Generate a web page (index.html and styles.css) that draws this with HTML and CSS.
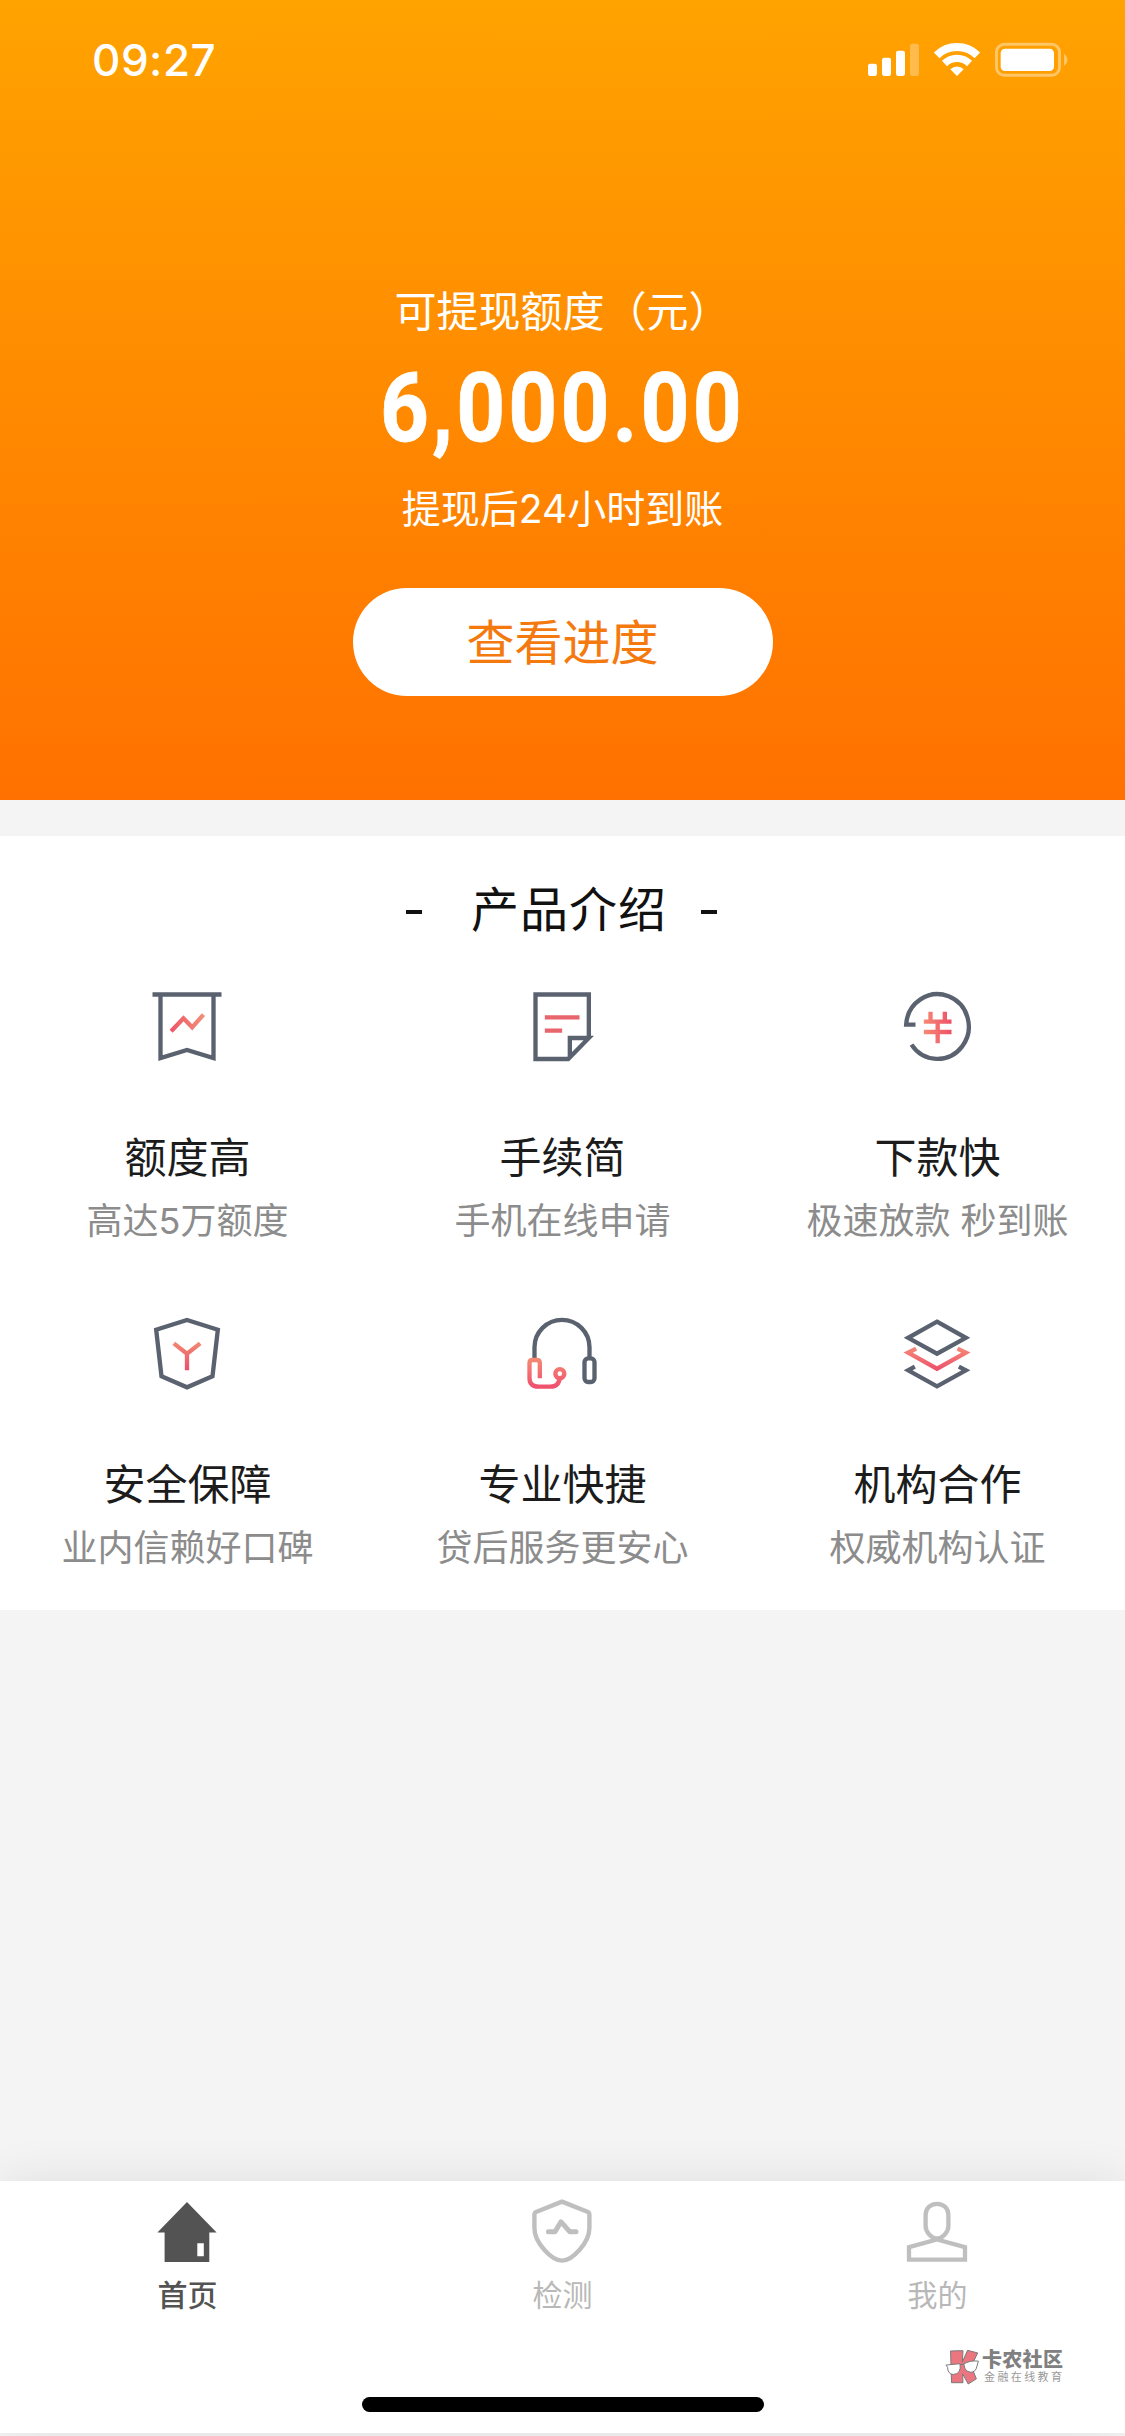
FILE: index.html
```html
<!DOCTYPE html>
<html lang="zh-CN">
<head>
<meta charset="utf-8">
<title>首页</title>
<link rel="stylesheet" href="styles.css">
</head>
<body>
<div class="app">
  <header class="hero">
    <div class="status">
      <span class="clock">09:27</span>
      <svg class="status-icons" viewBox="84 60 603 120">
        <g fill="#fff">
          <rect x="84" y="131" width="27" height="37" rx="7"/>
          <rect x="126" y="113" width="27" height="55" rx="7"/>
          <rect x="168" y="92" width="27" height="76" rx="7"/>
          <rect x="210" y="71" width="27" height="97" rx="7" opacity=".3"/>
          <path d="M351 168l-20-20.500a29 29 0 0 1 40 0z"/>
          <rect x="482" y="86" width="160" height="67" rx="13"/>
          <path d="M672 102a20 20 0 0 1 0 35z" opacity=".4"/>
        </g>
        <g fill="none" stroke="#fff">
          <path d="M290 106a87.500 87.500 0 0 1 122 0" stroke-width="24"/>
          <path d="M313.500 130.500a54 54 0 0 1 75 0" stroke-width="22"/>
          <rect x="469.500" y="73" width="189" height="93" rx="24" stroke-width="9" opacity=".4"/>
        </g>
      </svg>
    </div>
    <p class="hero-label">可提现额度（元）</p>
    <p class="amount">6,000.00</p>
    <p class="hero-note">提现后24小时到账</p>
    <a class="progress-btn">查看进度</a>
  </header>

  <section class="intro">
    <h2 class="intro-title"><span class="dash"></span><span class="intro-text">产品介绍</span><span class="dash"></span></h2>
    <div class="grid">
      <div class="feature">
        <svg class="feature-icon" viewBox="292.500 48 240 240" fill="none" stroke-width="13">
          <defs><linearGradient id="warm-h" gradientUnits="userSpaceOnUse" x1="362" y1="0" x2="465" y2="0"><stop stop-color="#ee5566"/><stop offset="1" stop-color="#f0917a"/></linearGradient></defs>
          <path d="M309 73.500H516M333 74V264L412.500 240L492 264V74" stroke="#5b626f"/>
          <path d="M365 184L402 145L428 172L462 134" stroke="url(#warm-h)"/>
        </svg>
        <h3>额度高</h3><p>高达5万额度</p>
      </div>
      <div class="feature">
        <svg class="feature-icon" viewBox="277.500 48 240 240" fill="none" stroke-width="13">
          <path d="M478 201V73.500H318V267H416L478 204H421V262" stroke="#5b626f"/>
          <path d="M346 142H450M346 182H398" stroke="#e9656c"/>
        </svg>
        <h3>手续简</h3><p>手机在线申请</p>
      </div>
      <div class="feature">
        <svg class="feature-icon" viewBox="352.500 48 240 240" fill="none" stroke-width="12">
          <defs><linearGradient id="coin" gradientUnits="userSpaceOnUse" x1="433" y1="0" x2="516" y2="0"><stop stop-color="#f58a75"/><stop offset="1" stop-color="#ee5068"/></linearGradient></defs>
          <path d="M408 164H380A94 97 0 1 1 396 224" stroke="#5b626f" stroke-width="13"/>
          <path d="M433 155H516M433 186H516M453 125V155M496 125V155M474.500 155V220" stroke="url(#coin)" stroke-width="13"/>
        </svg>
        <h3>下款快</h3><p>极速放款 秒到账</p>
      </div>
      <div class="feature">
        <svg class="feature-icon" viewBox="292.500 69 240 240" fill="none" stroke-width="13">
          <defs><linearGradient id="warm-v" gradientUnits="userSpaceOnUse" x1="0" y1="155" x2="0" y2="240"><stop stop-color="#f28a72"/><stop offset="1" stop-color="#ea4f6c"/></linearGradient></defs>
          <path d="M412.500 90L505 119L489 259L412.500 292L336 259L320 119Z" stroke="#5b626f"/>
          <path d="M373 160L412.500 191L452 160M412.500 190V241" stroke="url(#warm-v)"/>
        </svg>
        <h3>安全保障</h3><p>业内信赖好口碑</p>
      </div>
      <div class="feature">
        <svg class="feature-icon" viewBox="277.500 69 240 240" fill="none" stroke-width="13">
          <defs><linearGradient id="mic" gradientUnits="userSpaceOnUse" x1="0" y1="205" x2="0" y2="295"><stop stop-color="#f58a72"/><stop offset="1" stop-color="#ef4f6e"/></linearGradient></defs>
          <path d="M315 205V172A82 82 0 0 1 480 172V205" stroke="#5b626f"/>
          <rect x="465" y="205" width="30" height="71" rx="11" stroke="#5b626f"/>
          <path d="M331 265V219Q331 210 322 210H309Q300 210 300 219V264Q300 290 328 290H362Q389 290 391 262" stroke="url(#mic)"/>
          <circle cx="391" cy="251" r="13.500" stroke="url(#mic)"/>
        </svg>
        <h3>专业快捷</h3><p>贷后服务更安心</p>
      </div>
      <div class="feature">
        <svg class="feature-icon" viewBox="352.500 69 240 240" fill="none" stroke-width="13">
          <defs><linearGradient id="layer" gradientUnits="userSpaceOnUse" x1="0" y1="170" x2="0" y2="243"><stop stop-color="#f58a78"/><stop offset="1" stop-color="#ec4f6a"/></linearGradient></defs>
          <path d="M472.500 95L559 143.500L472.500 191L386 143.500ZM406 230L386 241L472.500 289L559 241L538 230" stroke="#5b626f"/>
          <path d="M410 176L386 188L472.500 236L559 188L534 176" stroke="url(#layer)"/>
        </svg>
        <h3>机构合作</h3><p>权威机构认证</p>
      </div>
    </div>
  </section>

  <footer class="tabbar">
    <nav class="tabs">
      <a class="tab active">
        <svg class="tab-icon" viewBox="0 0 66 66"><path d="M33 4L62.600 34.500H55.300V64H10.600V34.500H3.400ZM43.300 45.300V58.300H49.800V45.300Z" fill="#535353" fill-rule="evenodd"/></svg>
        <span>首页</span>
      </a>
      <a class="tab">
        <svg class="tab-icon" viewBox="0 0 66 66" fill="none" stroke="#bfbfbf" stroke-width="4.400" stroke-linejoin="round"><path d="M33 3.600L59 14Q60.400 14.600 60.400 17V30C60.400 45 43 62.600 33 62.600S5.400 45 5.400 30V17Q5.400 14.600 7 14Z"/><path d="M19.400 33.700H26L32 23.800L40.700 33.700H47" stroke-linecap="round" stroke-width="5"/></svg>
        <span>检测</span>
      </a>
      <a class="tab">
        <svg class="tab-icon" viewBox="0 0 66 66" fill="none" stroke="#bfbfbf" stroke-width="4.300"><path d="M33 5.800C40 5.800 44.400 10.600 44.400 17V28C44.400 34.500 38 40.500 33 40.500S21.600 34.500 21.600 28V17C21.600 10.600 26 5.800 33 5.800Z"/><path d="M33 41.500L61 49.200V61.700H5V49.200Z"/></svg>
        <span>我的</span>
      </a>
    </nav>
    <div class="watermark">
      <svg class="wm-logo" viewBox="254 565 104 108" stroke="#777" stroke-width="3">
        <path d="M271 570L309 569L307 604L323 568L354 576L334 617L350 655L325 671L308 640L309 667L274 667Z" fill="#ec7680"/>
        <path d="M257 613L300 609Q305 640 279 642Q262 640 262 620ZM311 610Q330 598 356 601L352 616Q348 636 332 635Q314 632 313 615Z" fill="#fff"/>
        <path d="M300 612L313 610" fill="none"/>
      </svg>
      <div class="wm-text"><b>卡农社区</b><small>金融在线教育</small></div>
    </div>
    <div class="home-indicator"></div>
  </footer>
</div>
</body>
</html>
```
FILE: styles.css
```css
* { box-sizing: border-box; margin: 0; padding: 0; }
body {
  width: 1125px;
  background: #f4f4f4;
  font-family: Inter, "Noto Sans CJK SC", sans-serif;
}
svg { display: block; }
.app {
  width: 1125px;
  height: 2436px;
  display: flex;
  flex-direction: column;
  overflow: hidden;
  padding-bottom: 3px;
}

.hero {
  height: 800px;
  display: flex;
  flex-direction: column;
  align-items: center;
  color: #fff;
  background: linear-gradient(#ffa300, #ff7100);
}
.status {
  width: 100%;
  height: 282px;
  padding: 40px 56px 0 92px;
  display: flex;
  justify-content: space-between;
  align-items: flex-start;
}
.clock { font-size: 44px; line-height: 40px; font-weight: 550; letter-spacing: .5px; }
.status-icons { width: 201px; height: 40px; }
.hero-label { font-size: 42px; line-height: 60px; font-weight: 400; }
.amount {
  margin-top: 16px;
  font: 700 97px/100px Roboto, sans-serif;
  letter-spacing: 3.600px;
  transform: scaleX(.88);
  -webkit-text-stroke: .8px #fff;
}
.hero-note { margin-top: 21px; font-size: 39px; line-height: 60px; font-weight: 400; }
.progress-btn {
  margin-top: 49px;
  width: 420px;
  height: 108px;
  border-radius: 54px;
  background: #fff;
  color: #f47a10;
  font-size: 48px;
  line-height: 110px;
  font-weight: 400;
  text-align: center;
}

.intro { margin-top: 36px; height: 774px; background: #fff; }
.intro-title {
  height: 150px;
  padding-top: 38px;
  padding-right: 2px;
  display: flex;
  justify-content: center;
  font-size: 48px;
  line-height: 72px;
  font-weight: 400;
  color: #111;
}
.dash { width: 16px; height: 4px; margin-top: 36px; background: #111; }
.intro-text { letter-spacing: 1px; margin: 0 34px 0 49px; }
.grid { display: grid; grid-template-columns: repeat(3, 1fr); grid-auto-rows: 327px; }
.feature { display: flex; flex-direction: column; align-items: center; }
.feature-icon { width: 80px; height: 80px; margin-right: 1px; }
.feature h3 { margin-top: 62px; font-size: 42px; line-height: 60px; font-weight: 400; color: #1c1c1c; }
.feature p { margin-top: 8px; font-size: 36px; line-height: 50px; font-weight: 400; color: #8c8c8c; white-space: nowrap; }

.tabbar {
  margin-top: auto;
  height: 252px;
  background: #fff;
  box-shadow: 0 0 45px rgba(0, 0, 0, .09);
}
.tabs { display: grid; grid-template-columns: repeat(3, 1fr); height: 168px; padding-top: 17px; }
.tab { display: flex; flex-direction: column; align-items: center; color: #b8b8b8; font-size: 30px; line-height: 40px; }
.tab.active { color: #535353; font-weight: 500; }
.tab-icon { width: 66px; height: 66px; margin: 0 1px 11px 0; }
.watermark { display: flex; gap: 3px; height: 48px; padding-left: 945px; }
.wm-logo { width: 34px; height: 36px; }
.wm-text { display: flex; flex-direction: column; white-space: nowrap; color: #808080; }
.wm-text b { font-size: 20px; line-height: 22px; font-weight: 900; letter-spacing: .3px; }
.wm-text small { padding-left: 2px; font-size: 11px; line-height: 12px; letter-spacing: 2.400px; color: #999; }
.home-indicator { width: 402px; height: 15px; margin: 0 auto; border-radius: 8px; background: #000; }
```
